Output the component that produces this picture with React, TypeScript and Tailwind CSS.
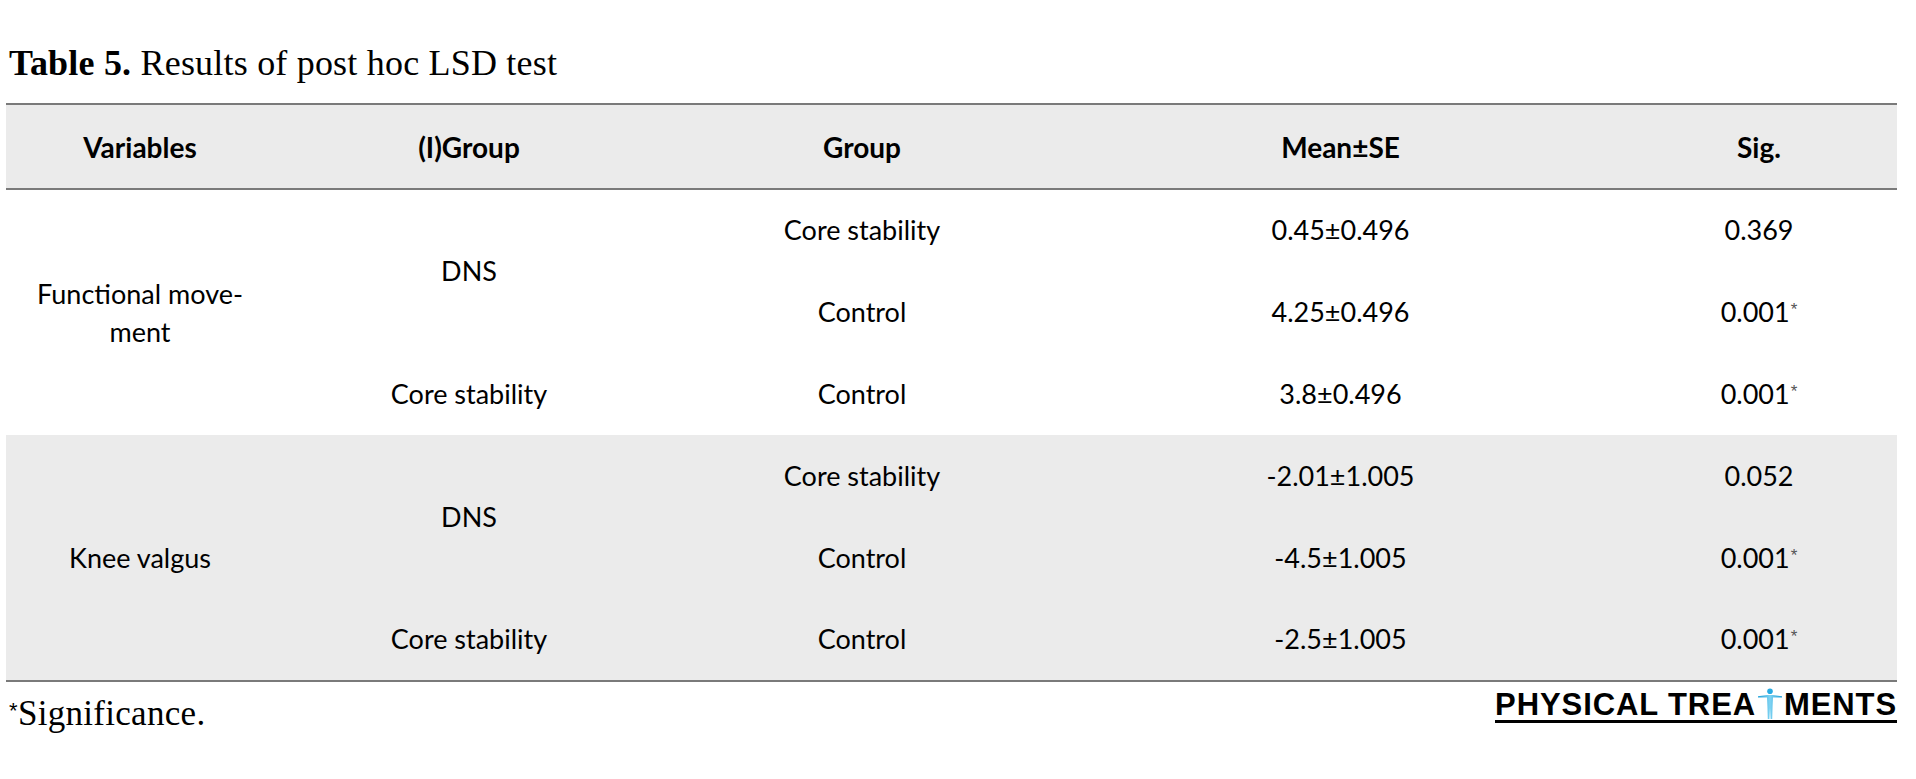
import React from 'react';

// Post hoc LSD results table, rows grouped by variable
const sections = [
  {
    variable: (
      <>
        Functional move-
        <br />
        ment
      </>
    ),
    rows: [
      { first: 'DNS', span: 2, group: 'Core stability', mean: '0.45±0.496', sig: '0.369', star: false },
      { first: null, span: 0, group: 'Control', mean: '4.25±0.496', sig: '0.001', star: true },
      { first: 'Core stability', span: 1, group: 'Control', mean: '3.8±0.496', sig: '0.001', star: true },
    ],
    shaded: false,
  },
  {
    variable: <>Knee valgus</>,
    rows: [
      { first: 'DNS', span: 2, group: 'Core stability', mean: '-2.01±1.005', sig: '0.052', star: false },
      { first: null, span: 0, group: 'Control', mean: '-4.5±1.005', sig: '0.001', star: true },
      { first: 'Core stability', span: 1, group: 'Control', mean: '-2.5±1.005', sig: '0.001', star: true },
    ],
    shaded: true,
  },
];

const serif = { fontFamily: '"Liberation Serif", "DejaVu Serif", serif' };
const arial = { fontFamily: '"Liberation Sans", Arial, sans-serif' };

function Figure() {
  return (
    <svg width="26" height="32" viewBox="0 0 26 32" className="mx-[1px] inline-block align-baseline">
      <defs>
        <linearGradient id="body" x1="0" y1="0" x2="1" y2="0">
          <stop offset="0" stopColor="#1e9fd8" />
          <stop offset="0.5" stopColor="#7fd3f2" />
          <stop offset="1" stopColor="#1e9fd8" />
        </linearGradient>
      </defs>
      <circle cx="13" cy="3.2" r="2.8" fill="#29abe2" />
      <path d="M1 8.2 L10 7 L16 7 L25 8.2 L25 9.4 L16 9.6 L15.6 18 L15.2 31 L13.6 31 L13 20 L12.4 31 L10.8 31 L10.4 18 L10 9.6 L1 9.4 Z" fill="url(#body)" />
    </svg>
  );
}

export default function App() {
  return (
    <div className="bg-white w-[1916px] h-[779px] pl-[6px] text-black" style={{ fontFamily: 'Lato, "Open Sans", sans-serif' }}>
      <div className="w-[1891px]">
        {/* Title */}
        <div className="h-[103px] pt-[43px] pl-[3px] text-[36px] leading-[40px] tracking-[0.2px]" style={serif}>
          <span className="font-bold">Table 5.</span> Results of post hoc LSD test
        </div>

        <table className="w-full table-fixed border-collapse">
          <colgroup>
            <col className="w-[268px]" />
            <col className="w-[390px]" />
            <col className="w-[396px]" />
            <col className="w-[561px]" />
            <col className="w-[276px]" />
          </colgroup>
          <thead>
            <tr className="bg-[#ebebeb] border-y-2 border-[#7a7a7a] h-[85px]">
              {['Variables', '(I)Group', 'Group', 'Mean±SE', 'Sig.'].map((h) => (
                <th key={h} className="text-[28px] font-bold text-center align-middle p-0">
                  {h}
                </th>
              ))}
            </tr>
          </thead>
          {sections.map((sec, si) => (
            <tbody key={si} className={`${sec.shaded ? 'bg-[#ebebeb] border-b-2 border-[#7a7a7a]' : ''}`}>
              {sec.rows.map((r, ri) => (
                <tr key={ri} className="h-[82px] text-[27px] text-center">
                  {ri === 0 && (
                    <td rowSpan={3} className="leading-[38px] align-middle p-0">
                      {sec.variable}
                    </td>
                  )}
                  {r.first && (
                    <td rowSpan={r.span} className="align-middle p-0">
                      {r.first}
                    </td>
                  )}
                  <td className="align-middle p-0">{r.group}</td>
                  <td className="align-middle p-0">{r.mean}</td>
                  <td className="align-middle p-0">
                    {r.sig}
                    {r.star && (
                      <span className="relative -top-[7px] ml-[1px] text-[17px] leading-[0] text-[#555]" style={arial}>
                        *
                      </span>
                    )}
                  </td>
                </tr>
              ))}
            </tbody>
          ))}
        </table>

        {/* Footnote + journal logo */}
        <div className="flex justify-between items-start">
          <div className="mt-[12px] pl-[3px] text-[35px] leading-[40px] tracking-[0.3px]" style={serif}>
            <span className="text-[22px] leading-[0] relative -top-[7px]" style={arial}>
              *
            </span>
            Significance.
          </div>
          <div className="mt-[9px] h-[32px] border-b-[3px] border-black text-[31px] leading-[30px] font-bold tracking-[0.9px] flex items-end" style={arial}>
            <span>PHYSICAL TREA</span>
            <Figure />
            <span>MENTS</span>
          </div>
        </div>
      </div>
    </div>
  );
}
